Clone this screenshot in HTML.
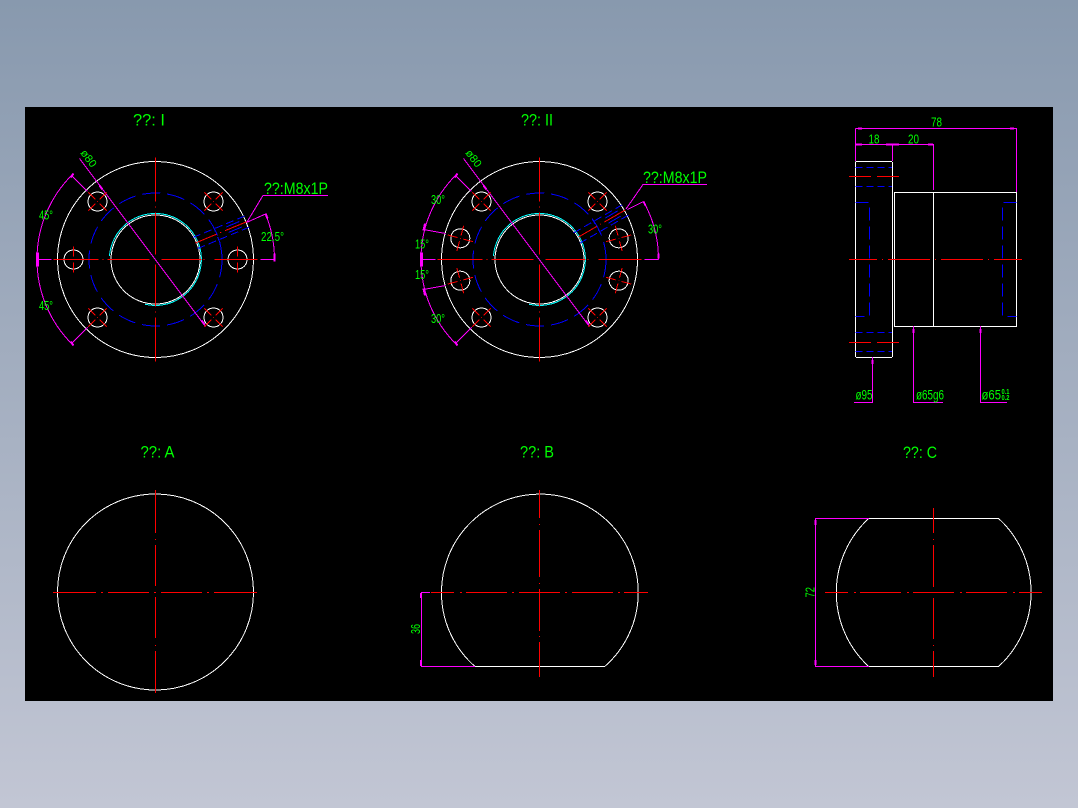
<!DOCTYPE html>
<html><head><meta charset="utf-8"><style>
html,body{margin:0;padding:0;width:1078px;height:808px;overflow:hidden;background:linear-gradient(#8899ae,#c2c6d4)}
svg{position:absolute;left:0;top:0}
text{font-family:"Liberation Sans",sans-serif;fill:#0f0;font-size:13px;white-space:pre}
.t{font-size:16.5px}
.l{font-size:17px}
.w{stroke:#fff;fill:none}.r{stroke:#f00;fill:none}.b{stroke:#00f;fill:none}.c{stroke:#0ff;fill:none}.m{stroke:#f0f;fill:none}
.bd{stroke:#00f;fill:none;stroke-dasharray:18 7}
.sd{stroke:#00f;fill:none;stroke-dasharray:8 4}
</style></head><body>
<svg width="1078" height="808" viewBox="0 0 1078 808" shape-rendering="crispEdges">
<defs>
<g id="hole"><circle r="9.5" class="w"/><path class="r" d="M-13 0H-3M3 0H13M0 -13V-3M0 3V13M0 0h.6"/></g>
<g id="flange">
<circle r="98" class="w"/><circle r="44.5" class="w"/>
<path class="c" d="M-46 -3.7A46 46 0 1 1 -10.3 44.8"/>
<circle r="66.5" class="bd"/>
<path class="r" d="M-102 0H-57M-53 0h1M-48 0H-6M6 0H46M48 0h1M59 0H102M0 -102V-58M0 -53v1M0 -47V-5M0 5V47M0 52v1M0 58V102"/>
<path class="m" d="M-76 -101L50 67"/>
<path class="m" stroke-width="2" d="M-56 -74L-53 -70M46 61L49 65"/>
</g>
</defs>
<rect x="25" y="107" width="1028" height="594" fill="#000"/>

<!-- View I -->
<text class="t" x="133" y="125.500" textLength="32" lengthAdjust="spacingAndGlyphs">??: I</text>
<g transform="translate(155.5 259.5)">
<use href="#flange"/>
<use href="#hole" x="-82" y="0"/><use href="#hole" x="82" y="0"/>
<g transform="translate(-58 -58) rotate(45)"><use href="#hole"/></g>
<g transform="translate(58 -58) rotate(45)"><use href="#hole"/></g>
<g transform="translate(-58 58) rotate(45)"><use href="#hole"/></g>
<g transform="translate(58 58) rotate(45)"><use href="#hole"/></g>
<g transform="rotate(-22.5)">
<path class="r" d="M43 0H66M70 0h1M75 0H99"/>
<path class="sd" d="M43 -6H99M43 6H99"/>
<path class="b" d="M78 -3H92M78 3H92M66 -9V-3M66 3V9"/>
</g>
<path class="m" d="M-118.500 0A118.500 118.500 0 0 1 -84 -84M-118.500 0A118.500 118.500 0 0 0 -84 84M-84 -84L-68 -68M-84 84L-68 68M-118 0H-104M105 0H119M119 0A119 119 0 0 0 110 -45.500M110 -45.500L91 -37"/>
<path class="m" stroke-width="2" d="M-85 -82L-82 -86M-85 82L-82 86M119 -6V2M110 -46L112 -41"/>
<path class="m" stroke-width="3" d="M-118 -7V7"/>
</g>
<path class="m" d="M247 222L263 195.500H328"/>
<text class="l" x="264" y="194" textLength="64" lengthAdjust="spacingAndGlyphs">??:M8x1P</text>
<text transform="translate(80 153) rotate(53)" style="font-size:11px" textLength="19" lengthAdjust="spacingAndGlyphs">ø80</text>
<text x="39" y="219.500" textLength="14" lengthAdjust="spacingAndGlyphs">45°</text>
<text x="39" y="310" textLength="14" lengthAdjust="spacingAndGlyphs">45°</text>
<text x="261" y="241" textLength="23" lengthAdjust="spacingAndGlyphs">22.5°</text>

<!-- View II -->
<text class="t" x="521" y="125.500" textLength="32" lengthAdjust="spacingAndGlyphs">??: II</text>
<g transform="translate(539.5 259.5)">
<use href="#flange"/>
<g transform="translate(-58 -58) rotate(45)"><use href="#hole"/></g>
<g transform="translate(58 -58) rotate(45)"><use href="#hole"/></g>
<g transform="translate(-58 58) rotate(45)"><use href="#hole"/></g>
<g transform="translate(58 58) rotate(45)"><use href="#hole"/></g>
<g transform="translate(-79.200 -21.200) rotate(15)"><use href="#hole"/></g>
<g transform="translate(79.200 -21.200) rotate(-15)"><use href="#hole"/></g>
<g transform="translate(-79.200 21.200) rotate(-15)"><use href="#hole"/></g>
<g transform="translate(79.200 21.200) rotate(15)"><use href="#hole"/></g>
<g transform="rotate(-30)">
<path class="r" d="M45 0H66M70 0h1M75 0H99"/>
<path class="sd" d="M43 -6H99M43 6H99"/>
<path class="b" d="M78 -3H92M78 3H92M66 -9V-3M66 3V9"/>
</g>
<path class="m" d="M-118.500 0A118.500 118.500 0 0 1 -84 -84M-118.500 0A118.500 118.500 0 0 0 -84 84M-84 -84L-68 -68M-84 84L-68 68M-116 -30L-94 -26M-116 30L-94 26M-118 0H-104M105 0H119M119 0A119 119 0 0 0 104 -58M104 -58L88 -50"/>
<path class="m" stroke-width="2" d="M-85 -82L-82 -86M-85 82L-82 86M-114.500 -36L-116 -29M-114.500 36L-116 29M119 -6V-1M104 -58L106 -54"/>
<path class="m" stroke-width="3" d="M-118 -7V7"/>
</g>
<path class="m" d="M626 209L643 184.500H707"/>
<text class="l" x="643" y="183" textLength="64" lengthAdjust="spacingAndGlyphs">??:M8x1P</text>
<text transform="translate(465 153) rotate(53)" style="font-size:11px" textLength="19" lengthAdjust="spacingAndGlyphs">ø80</text>
<text x="431" y="204" textLength="14" lengthAdjust="spacingAndGlyphs">30°</text>
<text x="415" y="248.500" textLength="14" lengthAdjust="spacingAndGlyphs">15°</text>
<text x="415" y="279" textLength="14" lengthAdjust="spacingAndGlyphs">15°</text>
<text x="431" y="323" textLength="14" lengthAdjust="spacingAndGlyphs">30°</text>
<text x="648" y="233.500" textLength="14" lengthAdjust="spacingAndGlyphs">30°</text>

<!-- Side view -->
<path class="w" d="M855.500 162V357M892.500 162V357M855.500 161.500H892M856 357.500H892M894.500 192.500H1016.500V326.500H894.500ZM933.500 192V326"/>
<path class="b" stroke-dasharray="7 4" d="M855.500 167.500H892M855.500 186.500H892M855.500 332.500H892M855.500 351.500H892"/>
<path class="r" d="M849 176.500H871M877 176.500H899M849 342.500H871M877 342.500H899"/>
<path class="r" d="M849 259.500H877M882 259.500h1M888 259.500H930M935 259.500h1M941 259.500H983M988 259.500h1M994 259.500H1022"/>
<path class="b" stroke-dasharray="13 6" d="M855.500 202.500H869.500V316.500H855.500M1016.500 202.500H1002.500V316.500H1016.500"/>
<path class="m" d="M855.500 128.500H1016.500V192M855.500 128.500V161M855.500 144.500H933.500V190M892.500 144.500V161M872.500 357V402.500H854M913.500 326V402.500H943M980.500 326V402.500H1007"/>
<path class="m" stroke-width="2" d="M858 128.500H862M1010 128.500H1014M856 144.500H862M886 144.500H899M928 144.500H933M872.500 360V364M913.500 329V333M980.500 329V333"/>
<text x="931" y="126.500" textLength="11" lengthAdjust="spacingAndGlyphs">78</text>
<text x="868.500" y="143.500" textLength="11" lengthAdjust="spacingAndGlyphs">18</text>
<text x="908" y="143.500" textLength="11" lengthAdjust="spacingAndGlyphs">20</text>
<text x="855.500" y="399.500" style="font-size:14px" textLength="17" lengthAdjust="spacingAndGlyphs">ø95</text>
<text x="916" y="399.500" style="font-size:14px" textLength="28" lengthAdjust="spacingAndGlyphs">ø65g6</text>
<text x="981.500" y="399.500" style="font-size:14px" textLength="19.500" lengthAdjust="spacingAndGlyphs">ø65</text>
<text x="1001.500" y="394" style="font-size:7px;font-weight:bold" textLength="8" lengthAdjust="spacingAndGlyphs">0.1</text>
<text x="1001.500" y="400" style="font-size:7px;font-weight:bold" textLength="8" lengthAdjust="spacingAndGlyphs">0.2</text>

<!-- View A -->
<text class="t" x="140.500" y="457.500" textLength="34" lengthAdjust="spacingAndGlyphs">??: A</text>
<circle cx="155.500" cy="592" r="98" class="w"/>
<path class="r" d="M155.500 490V533M155.500 539v1M155.500 545V586M155.500 597V638M155.500 645v1M155.500 651V693"/>
<path class="r" d="M53 592.500H96M101 592.500h2M108 592.500H149M154 592.500h2M161 592.500H202M207 592.500h2M214 592.500H257"/>

<!-- View B -->
<text class="t" x="520" y="457.500" textLength="34" lengthAdjust="spacingAndGlyphs">??: B</text>
<path class="w" d="M475 666.500H604.700A98.400 98.400 0 1 0 475 666.500Z"/>
<path class="r" d="M539.500 490V518M539.500 524v1M539.500 530V577M539.500 583v1M539.500 589V631M539.500 636v1M539.500 642V677"/>
<path class="r" d="M431 592.500H454M460 592.500h2M466 592.500H507M512 592.500h2M519 592.500H560M565 592.500h2M572 592.500H613M618 592.500h2M624 592.500H648"/>
<path class="m" d="M430 592.500H421.500V666.500H475"/>
<path class="m" stroke-width="2" d="M421 593V598M421 660V666"/>
<text transform="translate(420 634) rotate(-90)" textLength="10" lengthAdjust="spacingAndGlyphs">36</text>

<!-- View C -->
<text class="t" x="903" y="458" textLength="34" lengthAdjust="spacingAndGlyphs">??: C</text>
<path class="w" d="M868.700 518.500H998.700A100.700 100.700 0 0 1 998.700 666.500H868.700A100.700 100.700 0 0 1 868.700 518.500Z"/>
<path class="r" d="M933.500 508V533M933.500 539v1M933.500 545V587M933.500 598V639M933.500 645v1M933.500 651V677"/>
<path class="r" d="M825 592.500H848M854 592.500h2M860 592.500H901M907 592.500h2M913 592.500H954M960 592.500h2M966 592.500H1007M1013 592.500h2M1019 592.500H1042"/>
<path class="m" d="M869 518.500H815.500V666.500H869"/>
<path class="m" stroke-width="2" d="M815.500 520V525M815.500 660V665"/>
<text transform="translate(814.500 597.500) rotate(-90)" textLength="10.500" lengthAdjust="spacingAndGlyphs">72</text>
</svg>
</body></html>
